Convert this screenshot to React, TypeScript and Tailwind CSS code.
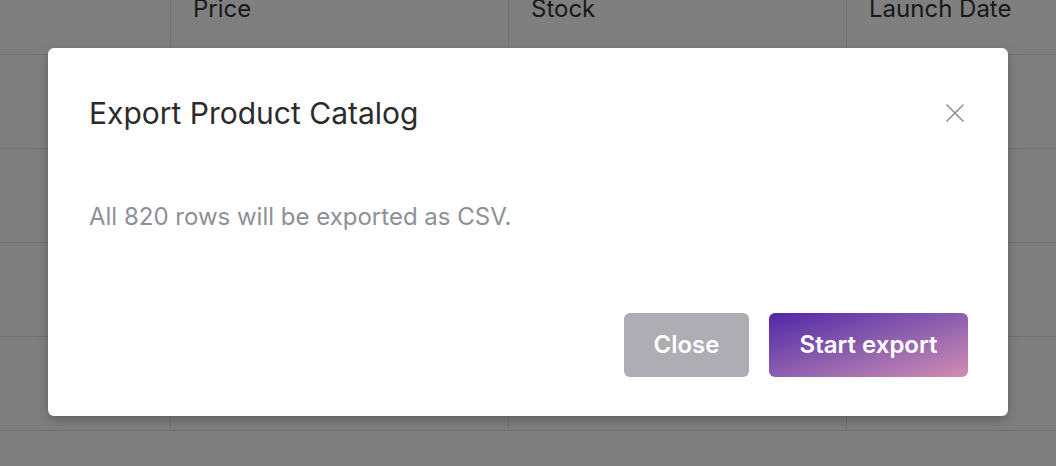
import { X } from "lucide-react";

const columns = ["", "Price", "Stock", "Launch Date"];
const rows = [0, 1, 2, 3, 4];

function BackgroundTable() {
  return (
    <div className="-mt-[39px] w-max">
      {rows.map((r) => (
        <div key={r} className="flex h-[94px] border-b border-gray-200">
          {columns.map((c, i) => (
            <div
              key={i}
              className={
                (i === 0 ? "w-[171px]" : "w-[338px]") +
                " flex h-full items-center border-r border-gray-200 px-[22px] pt-[2px] text-[24px] text-[#333]"
              }
            >
              {r === 0 ? c : ""}
            </div>
          ))}
        </div>
      ))}
    </div>
  );
}

export default function App() {
  return (
    <div
      className="relative h-[466px] w-[1056px] overflow-hidden bg-white"
      style={{ fontFamily: "Inter, 'Noto Sans', sans-serif" }}
    >
      <BackgroundTable />

      {/* overlay */}
      <div className="absolute inset-0 flex justify-center bg-black/50 pt-[48px]">
        <div className="flex h-[368px] w-[960px] flex-col rounded-md bg-white pl-[41px] pr-[40px] pb-[39px] shadow-[0_4px_12px_rgba(0,0,0,0.25)]">
          <div className="flex items-center justify-between pt-[47px]">
            <h2 className="text-[30px] leading-[36px] text-[#2b2b2b]">Export Product Catalog</h2>
            <button className="-mr-[3px] text-[#8e8e95]">
              <X size={32} strokeWidth={1.2} />
            </button>
          </div>
          <p className="mt-[70px] text-[24px] leading-[32px] text-[#8e9098]">
            All 820 rows will be exported as CSV.
          </p>
          <div className="mt-auto flex justify-end gap-5">
            <button className="h-16 w-[125px] rounded-md bg-[#aeadb3] text-[24px] font-semibold text-white">
              Close
            </button>
            <button className="h-16 w-[199px] rounded-md bg-gradient-to-br from-[#5322a6] to-[#d18db0] text-[24px] font-semibold text-white">
              Start export
            </button>
          </div>
        </div>
      </div>
    </div>
  );
}
